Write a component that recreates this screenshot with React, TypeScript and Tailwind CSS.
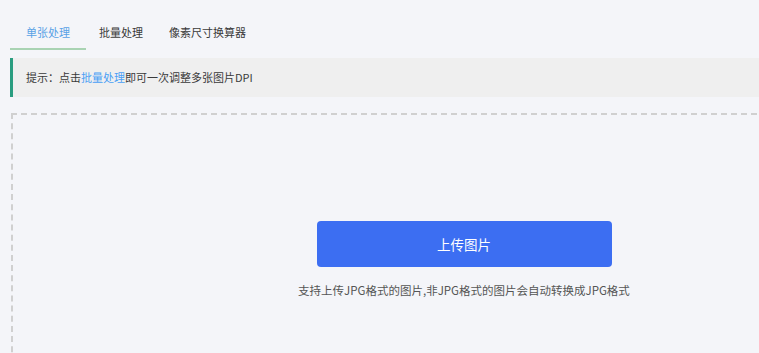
import React, { useState } from 'react';

const tabs = ['单张处理', '批量处理', '像素尺寸换算器'];

const App: React.FC = () => {
  const [active, setActive] = useState(0);

  return (
    <div
      className="w-[759px] h-[353px] overflow-hidden bg-[#f4f5f9] text-[#333]"
      style={{ fontFamily: '"Noto Sans CJK SC", "Noto Sans", sans-serif' }}
    >
      {/* tabs */}
      <div className="flex items-end h-[50px] pl-[10px]">
        {tabs.map((tab, i) => (
          <button
            key={tab}
            onClick={() => setActive(i)}
            className={
              i === active
                ? 'h-[30px] px-[16px] text-[11px] leading-[16px] text-[#5aa2e6] border-b-2 border-[#a9d3b3] pb-[5px]'
                : 'h-[30px] px-[13px] text-[11px] leading-[16px] text-[#3a3a3a] border-b-2 border-transparent pb-[5px]'
            }
          >
            {tab}
          </button>
        ))}
      </div>

      {/* tip */}
      <div className="mt-[8px] ml-[10px] h-[39px] flex items-center bg-[#efefef] border-l-[3px] border-[#2a9d80] pl-[13px] text-[11px] text-[#3a3a3a]">
        提示：点击<span className="text-[#4a9ff5]">批量处理</span>即可一次调整多张图片DPI
      </div>

      {/* upload area */}
      <div className="mt-[16px] ml-[11px] w-[906px] h-[300px] border-2 border-dashed border-[#d0d0d0] flex flex-col items-center pt-[106px]">
        <button className="w-[295px] h-[46px] rounded-[4px] bg-[#3c6ef2] text-white text-[13.5px]">
          上传图片
        </button>
        <p className="mt-[15px] text-[11.5px] text-[#555]">
          支持上传JPG格式的图片,非JPG格式的图片会自动转换成JPG格式
        </p>
      </div>
    </div>
  );
};

export default App;
